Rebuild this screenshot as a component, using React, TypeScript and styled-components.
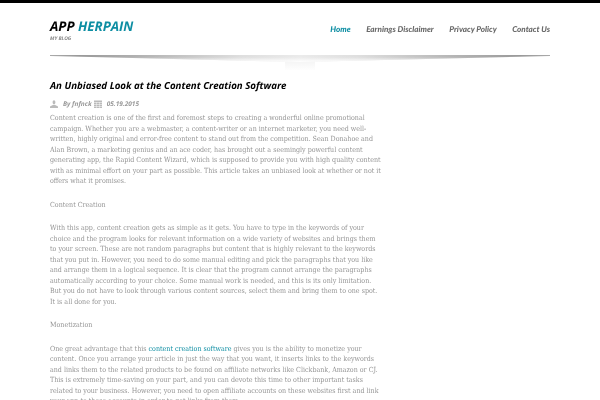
import React from 'react';
import styled, { createGlobalStyle } from 'styled-components';

const GlobalStyle = createGlobalStyle`
  html, body {
    margin: 0;
    padding: 0;
    background: #fff;
    height: 400px;
    overflow: hidden;
    text-rendering: geometricPrecision;
  }
`;

const Page = styled.div`
  border-top: 3px solid #000;
  padding: 0 50px;
  will-change: transform;
`;

const Header = styled.header`
  display: flex;
  justify-content: space-between;
  align-items: flex-start;
  height: 52px;
`;

const Brand = styled.div`
  padding-top: 14px;
`;

const Logo = styled.h1`
  margin: 0;
  font: italic 700 13.3px/18px 'Open Sans', sans-serif;
  color: #000;
`;

const LogoAccent = styled.span`
  color: #0e8ea3;
`;

const Tagline = styled.div`
  font: italic 700 5px/7px 'Open Sans', sans-serif;
  color: #888;
  margin-top: 1px;
`;

const Nav = styled.nav`
  display: flex;
  gap: 15.5px;
  padding-top: 20px;
`;

const NavLink = styled.a<{ $active?: boolean }>`
  font: italic 900 8.1px/12px 'Lato', sans-serif;
  color: ${p => (p.$active ? '#0e8ea3' : '#6a6a6a')};
`;

const DividerWrap = styled.div`
  position: relative;
  height: 2px;
  margin-bottom: 22px;
`;

const Rule = styled.div`
  height: 7px;
  background:
    linear-gradient(180deg, rgba(255, 255, 255, 0) 30%, #fff 100%),
    linear-gradient(90deg, #aaa 0%, #999 6%, #bbb 22%, #dedede 38%, #ebebeb 50%, #dedede 62%, #bbb 78%, #999 94%, #aaa 100%);
  clip-path: polygon(0 0, 100% 0, 100% 14%, 50% 100%, 0 14%);
`;

const Glow = styled.div`
  position: absolute;
  top: 1px;
  left: 235px;
  width: 30px;
  height: 14px;
  background: linear-gradient(180deg, #efefef 0%, #f8f8f8 60%, #fefefe 100%);
`;

const Article = styled.article`
  width: 340px;
`;

const Title = styled.h2`
  margin: 0;
  font: italic 700 9.7px/14px 'Open Sans', sans-serif;
  color: #000;
  white-space: nowrap;
`;

const Meta = styled.div`
  display: flex;
  align-items: center;
  margin: 6px 0 4px;
  height: 10px;
  font: italic 700 6.5px/10px 'Open Sans', sans-serif;
  color: #999;
`;

const MetaIcon = styled.svg`
  width: 8px;
  height: 8px;
  fill: #bbb;
  flex: none;
`;

const Author = styled.span`
  margin: 0 2px 0 5px;
`;

const MetaDate = styled.span`
  margin-left: 5px;
`;

const Paragraph = styled.p`
  margin: 0 0 13px;
  font: 400 7.05px/10.5px 'DejaVu Serif Condensed', 'DejaVu Serif', serif;
  font-stretch: condensed;
  color: #949494;
  white-space: nowrap;
`;

const TextLink = styled.a`
  color: #0e8ea3;
`;

export default function App() {
  return (
    <>
      <GlobalStyle />
      <Page>
        <Header>
          <Brand>
            <Logo>
              APP <LogoAccent>HERPAIN</LogoAccent>
            </Logo>
            <Tagline>MY BLOG</Tagline>
          </Brand>
          <Nav>
            <NavLink $active>Home</NavLink>
            <NavLink>Earnings Disclaimer</NavLink>
            <NavLink>Privacy Policy</NavLink>
            <NavLink>Contact Us</NavLink>
          </Nav>
        </Header>
        <DividerWrap>
          <Glow />
          <Rule />
        </DividerWrap>
        <Article>
          <Title>An Unbiased Look at the Content Creation Software</Title>
          <Meta>
            <MetaIcon viewBox="0 0 8 8">
              <path d="M2.6 2.2C2.6 1 3.2.2 4 .2s1.4.8 1.4 2S4.8 4.4 4 4.4 2.6 3.4 2.6 2.2z" />
              <path d="M0 8V6.6L2.8 5h2.4L8 6.6V8z" />
            </MetaIcon>
            <Author>By fnfnck</Author>
            <MetaIcon viewBox="0 0 8 8">
              <path d="M0 .5h8v1.5H0z" />
              <path d="M0 2.5h2.4v1.6H0z M2.8 2.5h2.4v1.6H2.8z M5.6 2.5H8v1.6H5.6z M0 4.5h2.4v1.6H0z M2.8 4.5h2.4v1.6H2.8z M5.6 4.5H8v1.6H5.6z M0 6.5h2.4V8H0z M2.8 6.5h2.4V8H2.8z M5.6 6.5H8V8H5.6z" />
            </MetaIcon>
            <MetaDate>05.19.2015</MetaDate>
          </Meta>
          <Paragraph>
            Content creation is one of the first and foremost steps to creating a wonderful online promotional<br />
            campaign. Whether you are a webmaster, a content-writer or an internet marketer, you need well-<br />
            written, highly original and error-free content to stand out from the competition. Sean Donahoe and<br />
            Alan Brown, a marketing genius and an ace coder, has brought out a seemingly powerful content<br />
            generating app, the Rapid Content Wizard, which is supposed to provide you with high quality content<br />
            with as minimal effort on your part as possible. This article takes an unbiased look at whether or not it<br />
            offers what it promises.
          </Paragraph>
          <Paragraph>Content Creation</Paragraph>
          <Paragraph>
            With this app, content creation gets as simple as it gets. You have to type in the keywords of your<br />
            choice and the program looks for relevant information on a wide variety of websites and brings them<br />
            to your screen. These are not random paragraphs but content that is highly relevant to the keywords<br />
            that you put in. However, you need to do some manual editing and pick the paragraphs that you like<br />
            and arrange them in a logical sequence. It is clear that the program cannot arrange the paragraphs<br />
            automatically according to your choice. Some manual work is needed, and this is its only limitation.<br />
            But you do not have to look through various content sources, select them and bring them to one spot.<br />
            It is all done for you.
          </Paragraph>
          <Paragraph>Monetization</Paragraph>
          <Paragraph>
            One great advantage that this <TextLink>content creation software</TextLink> gives you is the ability to monetize your<br />
            content. Once you arrange your article in just the way that you want, it inserts links to the keywords<br />
            and links them to the related products to be found on affiliate networks like Clickbank, Amazon or CJ.<br />
            This is extremely time-saving on your part, and you can devote this time to other important tasks<br />
            related to your business. However, you need to open affiliate accounts on these websites first and link<br />
            your app to these accounts in order to get links from them.
          </Paragraph>
        </Article>
      </Page>
    </>
  );
}
